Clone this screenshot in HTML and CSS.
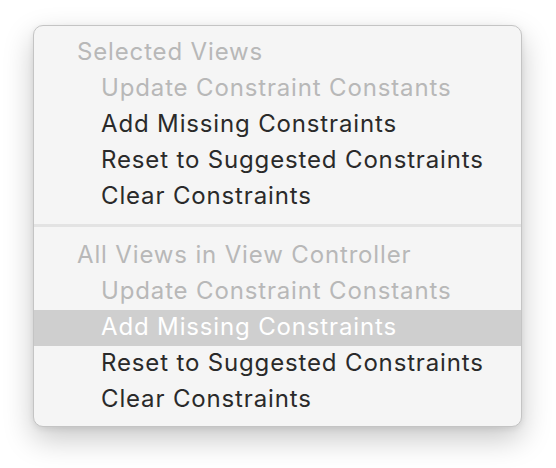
FILE: index.html
```html
<!DOCTYPE html>
<html>
<head>
<meta charset="utf-8">
<link rel="stylesheet" href="styles.css">
</head>
<body>
<div class="stage">
  <div class="menu">
    <div class="row header">Selected Views</div>
    <div class="row item disabled">Update Constraint Constants</div>
    <div class="row item">Add Missing Constraints</div>
    <div class="row item">Reset to Suggested Constraints</div>
    <div class="row item">Clear Constraints</div>
    <div class="sep"></div>
    <div class="row header">All Views in View Controller</div>
    <div class="row item disabled">Update Constraint Constants</div>
    <div class="row item active">Add Missing Constraints</div>
    <div class="row item">Reset to Suggested Constraints</div>
    <div class="row item">Clear Constraints</div>
  </div>
</div>
</body>
</html>
```
FILE: styles.css
```css
html, body {
  margin: 0;
  padding: 0;
  background: #ffffff;
}
.stage {
  padding: 25px 0 42px 33px;
}
.menu {
  width: 487px;
  box-sizing: content-box;
  background: #f5f5f5;
  border: 1px solid #c4c4c4;
  border-radius: 10px;
  padding: 9px 0 8px;
  box-shadow: 0 12px 30px rgba(0,0,0,0.22), 0 2px 6px rgba(0,0,0,0.08);
  font-family: Inter, "Liberation Sans", Arial, sans-serif;
  font-size: 24px;
  letter-spacing: 0.85px;
}
.row {
  height: 36px;
  line-height: 34px;
  white-space: nowrap;
  color: #2a2a2a;
}
.header {
  padding-left: 43px;
  color: #b8b8b8;
}
.item {
  padding-left: 67px;
}
.disabled {
  color: #b8b8b8;
}
.active {
  background: #cfcfcf;
  color: #ffffff;
}
.sep {
  height: 3px;
  background: #e3e3e3;
  margin: 9px 0 11px;
}
```
